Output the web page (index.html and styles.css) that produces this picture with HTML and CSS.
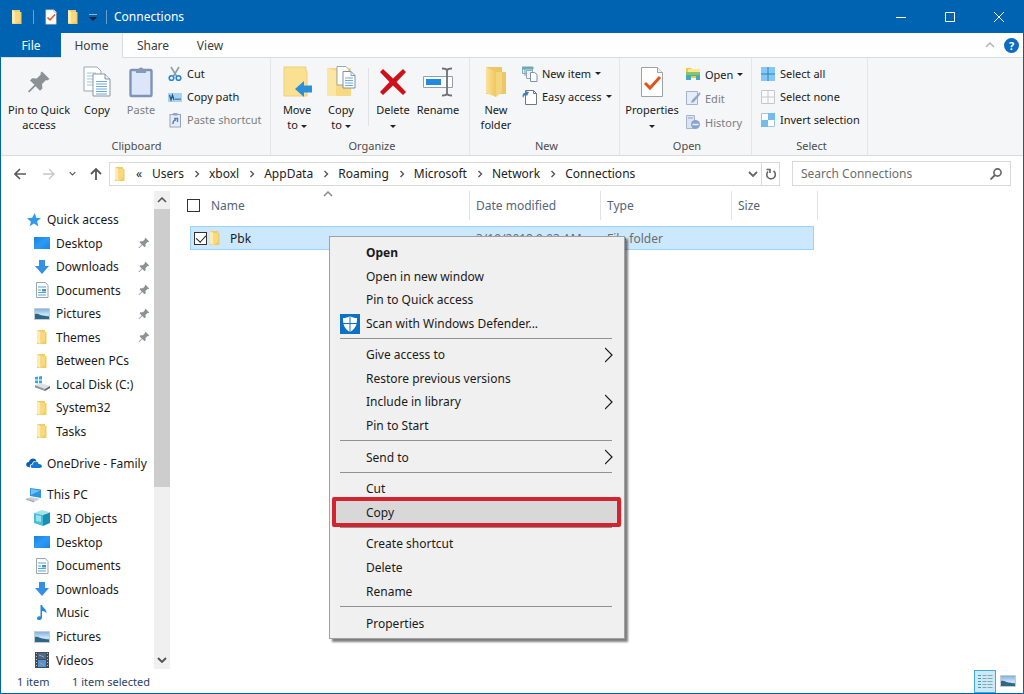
FILE: index.html
```html
<!DOCTYPE html>
<html lang="en">
<head>
<meta charset="utf-8">
<title>Connections</title>
<link rel="stylesheet" href="styles.css">
</head>
<body>
<svg class="sprite" aria-hidden="true">
  <defs>
    <linearGradient id="g-blue" x1="0" y1="0" x2="1" y2="1"><stop offset="0" stop-color="#1581dd"/><stop offset=".5" stop-color="#2d9bf5"/><stop offset="1" stop-color="#1787e6"/></linearGradient>
    <linearGradient id="g-folder" x1="0" x2="1"><stop offset="0" stop-color="#fbe39a"/><stop offset="1" stop-color="#f0c85c"/></linearGradient>
    <linearGradient id="g-sky" x1="0" y1="0" x2="0" y2="1"><stop offset="0" stop-color="#78aee0"/><stop offset=".6" stop-color="#d5e8f7"/><stop offset="1" stop-color="#26566f"/></linearGradient>
    <symbol id="folder" viewBox="0 0 16 16"><path d="M3 1h8v2h1.500v12H3z" fill="#f1cb67"/><path d="M3 1l3.500 2v12L3 13.500z" fill="#fdecae"/><path d="M6.500 3H11v9l-4.500 3z" fill="#f8d980"/></symbol>
    <symbol id="folder-big" viewBox="0 0 32 32"><path d="M6 1h16v5h4v22H6z" fill="#edc765"/><path d="M6 1l10 5v25L6 27z" fill="url(#g-folder)"/><path d="M16 6h6v20l-6 5z" fill="#f5d57c"/></symbol>
    <symbol id="pin" viewBox="0 0 16 16"><path d="M10 1l5 5-1.500 1-.8-.3-2.700 2.700.3 3-1.600 1.400-3-3L1.500 15l-.8-.8L5 9.900 2 7l1.400-1.500 3.100.2L9.200 3 9 2z" fill="#8c9196"/></symbol>
    <symbol id="copy" viewBox="0 0 32 32"><path d="M3 1h13l4 4v20H3z" fill="#fff" stroke="#9aa7b3"/><path d="M6 7h9M6 10h10M6 13h7M6 16h7M6 19h7" stroke="#9cc3e6"/><path d="M12 8h12l5 5v17H12z" fill="#fff" stroke="#8795a3"/><path d="M24 8v5h5" fill="#e6edf4" stroke="#8795a3"/><path d="M15 15.500h11M15 18h11M15 20.500h11M15 23h11M15 25.500h11M15 28h11" stroke="#6fa8da"/></symbol>
    <symbol id="paste" viewBox="0 0 32 32"><rect x="5.500" y="4" width="21" height="26" rx="1" fill="#dbe7f8" stroke="#7f93b8" stroke-width="2.400"/><path d="M11 7V4h2.500a2.500 2.500 0 0 1 5 0H21v3z" fill="#8998b4"/></symbol>
    <symbol id="cut" viewBox="0 0 16 16"><path d="M4 1l5.500 9M12 1L6.500 10" stroke="#8d9eaa" stroke-width="1.600" fill="none"/><circle cx="4.500" cy="12" r="2.300" fill="none" stroke="#2788cf" stroke-width="1.600"/><circle cx="11.500" cy="12" r="2.300" fill="none" stroke="#2788cf" stroke-width="1.600"/></symbol>
    <symbol id="path" viewBox="0 0 16 16"><path d="M1 4h14v9H1z" fill="#a7d3f2"/><path d="M2.500 6l1.500 5 1.500-5 1.500 5M9 9.500v1.500M11 9.500v1.500M13 9.500v1.500" stroke="#27577f" stroke-width="1.200" fill="none"/></symbol>
    <symbol id="shortcut" viewBox="0 0 16 16"><rect x="3" y="2.500" width="10.500" height="12.500" fill="#e4ecf8" stroke="#94a4c3"/><path d="M6 1h4.500v2.500H6z" fill="#94a4c3"/><path d="M6 12c0-3 1-4 3-4M7 6.500h3.500V10" fill="none" stroke="#617fae" stroke-width="1.500"/></symbol>
    <symbol id="move-to" viewBox="0 0 32 32"><path d="M3 1h22v4h1v25H3z" fill="#fbe091" stroke="#efcf78"/><path d="M14 23l9-8v4.500h8v7h-8V31z" fill="#2b90dc"/></symbol>
    <symbol id="copy-to" viewBox="0 0 32 32"><path d="M2 2h24v28H2z" fill="#f8d981"/><path d="M2 2l9 3v25H2z" fill="#fce6a3"/><path d="M12 .5h9l3 3V19H12z" fill="#fff" stroke="#98a5b2"/><path d="M18 5.500h8l4 4V22H18z" fill="#fff" stroke="#8090a2"/><path d="M26 5.500v4h4M20 12h8M20 14.500h8M20 17h8M20 19.500h8" fill="none" stroke="#6fa8da"/></symbol>
    <symbol id="delete" viewBox="0 0 32 32"><path d="M6 3l10 9.500L26 3l3 3-9.500 10L29 26l-3 3-10-9.500L6 29l-3-3 9.500-10L3 6z" fill="#cf1019"/></symbol>
    <symbol id="rename" viewBox="0 0 32 32"><path d="M1.500 10.500h29v11h-29z" fill="#fff" stroke="#8fa0b0"/><path d="M4 13h15v6H4z" fill="#1f8ae0"/><path d="M20 2.500c3 0 4.500 0 5 2 .5-2 2-2 5-2M25 4v25M20 29.500c3 0 4.500 0 5-2 .5 2 2 2 5 2" fill="none" stroke="#6a7278" stroke-width="1.800"/></symbol>
    <symbol id="new-item" viewBox="0 0 16 16"><path d="M.5 1.500h10v6H.5z" fill="#dceef3" stroke="#80aeb8"/><path d="M0 1h11v2H0zM3 3v7" fill="#6daab4" stroke="#6daab4"/><path d="M4.500 4.500h6v8h-6z" fill="#edf3f9" stroke="#94a6b8"/><path d="M8.500 6.500h4l2.500 2v7H8.500z" fill="#fff" stroke="#7c91a8"/></symbol>
    <symbol id="easy" viewBox="0 0 16 16"><path d="M3.500 1.500h8l3 3v11h-11z" fill="#fff" stroke="#70777e"/><path d="M11.500 1.500v3h3" fill="none" stroke="#70777e"/><path d="M1 9c-1-3 0-5 2-5V2l4 1-2 4-1-1C2 6 2 7 1 9z" fill="#3f83ad"/></symbol>
    <symbol id="check-doc" viewBox="0 0 32 32"><path d="M5.500 1.500h16l5 5v24h-21z" fill="#fff" stroke="#9aa3ab"/><path d="M21.500 1.500v5h5" fill="#edf0f3" stroke="#9aa3ab"/><path d="M9 17l5 5 10-11" fill="none" stroke="#e0541c" stroke-width="3"/></symbol>
    <symbol id="open" viewBox="0 0 16 16"><path d="M1 2h5l1 1h7v9H1z" fill="#f3c849"/><path d="M3 3h12v3H3z" fill="#fde68c"/><path d="M1 6h14v8h-4v-4H6v4H1z" fill="#49a8bc"/><path d="M1 6h14v3H1z" fill="#83c766"/></symbol>
    <symbol id="edit" viewBox="0 0 16 16"><path d="M1.500 1.500h11v13h-11z" fill="#e6edf7" stroke="#a3b2ca"/><path d="M15 2l-8 8-1 3 3-1 6.500-8z" fill="#8fa8cd"/></symbol>
    <symbol id="history" viewBox="0 0 16 16"><path d="M1.500 1.500h8v13h-8z" fill="#dbe4f4" stroke="#a6b4cf"/><path d="M3 4h5" stroke="#91a5c8"/><circle cx="10.500" cy="10.500" r="4.500" fill="#89a3cf"/><path d="M7.500 10.500h6" stroke="#e8effa" stroke-width="1.500"/></symbol>
    <symbol id="sel-all" viewBox="0 0 16 16"><path d="M1 1h14v14H1z" fill="#86c8f5"/><path d="M8 1v14M1 8h14" stroke="#2d84c5"/></symbol>
    <symbol id="sel-none" viewBox="0 0 16 16"><path d="M1.500 1.500h13v13h-13zM8 1.500v13M1.500 8h13" fill="#fafafa" stroke="#c4c8cc"/></symbol>
    <symbol id="sel-inv" viewBox="0 0 16 16"><path d="M1.500 1.500h13v13h-13z" fill="#fff" stroke="#9bc8e8"/><path d="M8 1h7v7H8zM1 8h7v7H1z" fill="#74baee"/></symbol>
    <symbol id="star" viewBox="0 0 16 16"><path d="M9 0l1.500 5.500L16 6l-4.500 3.500L13 15.500l-5-3.500-5 3 1.500-5L0 6l5.800-.5z" fill="#2f9ae8"/></symbol>
    <symbol id="desktop" viewBox="0 0 16 16"><path d="M0 2h16v12H0z" fill="url(#g-blue)"/></symbol>
    <symbol id="download" viewBox="0 0 16 16"><path d="M5 1h6v6h4l-7 8-7-8h4z" fill="#3490e3"/></symbol>
    <symbol id="document" viewBox="0 0 16 16"><path d="M2.500.5h9l2.500 3v12H2.500z" fill="#fff" stroke="#9aa5ae"/><path d="M4 5h8M4 8h3M4 10.500h8M4 13h8" stroke="#57a3d2"/><path d="M8 7h4v2.500H8z" fill="#4395c8"/></symbol>
    <symbol id="picture" viewBox="0 0 16 16"><path d="M.5 2.500h15v11H.5z" fill="url(#g-sky)" stroke="#c2ccd5"/><path d="M1 8c3-1 5 2 14 2.500V13H1z" fill="#2d6784"/></symbol>
    <symbol id="disk" viewBox="0 0 16 16"><path d="M1 1l3-.5v3H1zM5 .4L8 0v3.500H5zM1 4.500h3v3L1 7zM5 4.500h3V8l-3-.4z" fill="#28aede"/><path d="M1 9l6-2 9 3-5 3z" fill="#dfe2e4"/><path d="M1 9l10 4v2L1 11.500z" fill="#92989c"/><path d="M11 13l5-3v2l-5 3z" fill="#5d6367"/></symbol>
    <symbol id="cloud" viewBox="0 0 16 16"><path d="M1 11.500C-1 9 1 6.500 3 7c.5-4 6-5 7.500-1C7 5.500 6 8 6 9c-2 .3-2.500 2-2 3.500z" fill="#0a5fb4"/><path d="M6 13c-2-1-1.500-3.500.8-3.500C7 6 12 5.500 12.500 9c4-.5 4.500 4 1.500 4z" fill="#1679d0"/></symbol>
    <symbol id="pc" viewBox="0 0 16 16"><path d="M4 1l11 1.500V11L4 9z" fill="#2d95df"/><path d="M5 2l9 1.500L5 8z" fill="#73bff0"/><path d="M0 11.500l5-1.500 9 2-6 3z" fill="#cbd1d6"/><path d="M0 11.500L8 14v1.500L0 12.500z" fill="#9da5ac"/></symbol>
    <symbol id="cube" viewBox="0 0 16 16"><path d="M0 3l8-3 8 2.500L9 5z" fill="#a4e4ee"/><path d="M0 3l9 2v11l-9-3z" fill="#48bdd6"/><path d="M9 5l7-2.500V13l-7 3z" fill="#1a8fb6"/><path d="M2 5l5 1v6l-5-1z" fill="#9be2ed"/></symbol>
    <symbol id="music" viewBox="0 0 16 16"><path d="M6.500 0H8c.5 3 5 4 4.500 8.500C12 7 10 6 8 6v6.500c0 3-5 3.500-5 1 0-2 2-2.500 3.500-2z" fill="#2389df"/></symbol>
    <symbol id="video" viewBox="0 0 16 16"><path d="M1 0h14v16H1z" fill="#444b54"/><path d="M4 1h8v6H4z" fill="#46678f"/><path d="M4 8h8v7H4z" fill="#4f93d8"/><path d="M5 3l5 2M6 11l4 2" stroke="#c69a57"/><path d="M2.500 1v14M13.500 1v14" stroke="#b8bec5" stroke-dasharray="1 2"/></symbol>
    <symbol id="shield" viewBox="0 0 20 20"><path d="M0 0h20v20H0z" fill="#0c70c6"/><path d="M10 2c2 1.500 4.500 2 7 2 0 7-1.500 11-7 14C4.500 15 3 11 3 4c2.500 0 5-.5 7-2z" fill="#fff"/><path d="M10 2v16M3 9.500h14" stroke="#0c70c6"/></symbol>
    <symbol id="details" viewBox="0 0 16 16"><path d="M1 2.500h3M1 5.500h3M1 8.500h3M1 11.500h3M1 14.500h3" stroke="#4c93bb"/><path d="M5.500 2.500h4M10.500 2.500h5M5.500 5.500h4M10.500 5.500h5M5.500 8.500h4M10.500 8.500h5M5.500 11.500h4M10.500 11.500h5M5.500 14.500h4M10.500 14.500h5" stroke="#8aa4b0"/></symbol>
    <symbol id="chev-right" viewBox="0 0 8 16"><path d="M0 1l7 7-7 7" fill="none" stroke="currentColor" stroke-width="1.200"/></symbol>
    <symbol id="crumb-sep" viewBox="0 0 6 8"><path d="M1.500 1l3 3-3 3" fill="none" stroke="currentColor" stroke-width="1.400"/></symbol>
    <symbol id="chev-up" viewBox="0 0 10 6"><path d="M1 5l4-4 4 4" fill="none" stroke="currentColor" stroke-width="1.500"/></symbol>
    <symbol id="chev-down" viewBox="0 0 10 6"><path d="M1 1l4 4 4-4" fill="none" stroke="currentColor" stroke-width="1.800"/></symbol>
    <symbol id="arrow-left" viewBox="0 0 12 12"><path d="M12 6H1M6 1L1 6l5 5" fill="none" stroke="currentColor" stroke-width="1.600"/></symbol>
    <symbol id="arrow-right" viewBox="0 0 12 12"><path d="M0 6h11M6 1l5 5-5 5" fill="none" stroke="currentColor" stroke-width="1.300"/></symbol>
    <symbol id="arrow-up" viewBox="0 0 12 12"><path d="M6 12V1M1 6l5-5 5 5" fill="none" stroke="currentColor" stroke-width="1.800"/></symbol>
  </defs>
</svg>

<div class="window">
  <header class="titlebar">
    <svg class="i16"><use href="#folder"/></svg>
    <span class="bar"></span>
    <button class="quick" aria-label="Properties"><svg class="i16"><use href="#check-doc"/></svg></button>
    <button class="quick" aria-label="New folder"><svg class="i16"><use href="#folder"/></svg></button>
    <button class="quick customize" aria-label="Customize Quick Access Toolbar"><svg class="i-customize" viewBox="0 0 8 8"><path d="M0 1.500h8" stroke="#8bb7dd"/><path d="M0 4h8L4 8z" fill="#06213b"/></svg></button>
    <span class="bar"></span>
    <h1 class="title">Connections</h1>
    <div class="controls">
      <button class="control" aria-label="Minimize"><svg class="i-control" viewBox="0 0 10 10"><path d="M0 5.500h10" stroke="#fff"/></svg></button>
      <button class="control" aria-label="Maximize"><svg class="i-control" viewBox="0 0 10 10"><path d="M.5.5h9v9h-9z" fill="none" stroke="#fff"/></svg></button>
      <button class="control" aria-label="Close"><svg class="i-control" viewBox="0 0 10 10"><path d="M0 0l10 10M10 0L0 10" stroke="#fff"/></svg></button>
    </div>
  </header>

  <nav class="tabs" aria-label="Ribbon tabs">
    <button class="tab tab-file">File</button>
    <button class="tab tab-active">Home</button>
    <button class="tab">Share</button>
    <button class="tab tab-last">View</button>
    <div class="tab-tools">
      <button class="plain collapse" aria-label="Minimize the Ribbon"><svg class="i-chev"><use href="#chev-up"/></svg></button>
      <button class="help" aria-label="Help">?</button>
    </div>
  </nav>

  <section class="ribbon" aria-label="Home">
    <div class="group group-clipboard">
      <div class="tools">
        <button class="big big-wide"><svg class="i32 i-pin"><use href="#pin"/></svg><span>Pin to Quick<br>access</span></button>
        <button class="big big-narrow"><svg class="i32"><use href="#copy"/></svg><span>Copy</span></button>
        <button class="big big-narrow" disabled><svg class="i32"><use href="#paste"/></svg><span>Paste</span></button>
        <div class="stack">
          <button class="small"><svg class="i16"><use href="#cut"/></svg>Cut</button>
          <button class="small"><svg class="i16"><use href="#path"/></svg>Copy path</button>
          <button class="small" disabled><svg class="i16"><use href="#shortcut"/></svg>Paste shortcut</button>
        </div>
      </div>
      <h2 class="caption">Clipboard</h2>
    </div>
    <div class="group group-organize">
      <div class="tools">
        <button class="big big-narrow"><svg class="i32"><use href="#move-to"/></svg><span>Move<br>to <i class="caret"></i></span></button>
        <button class="big big-narrow"><svg class="i32"><use href="#copy-to"/></svg><span>Copy<br>to <i class="caret"></i></span></button>
        <span class="divider"></span>
        <button class="big big-narrow"><svg class="i32"><use href="#delete"/></svg><span>Delete<br><i class="caret"></i></span></button>
        <button class="big big-mid"><svg class="i32"><use href="#rename"/></svg><span>Rename</span></button>
      </div>
      <h2 class="caption">Organize</h2>
    </div>
    <div class="group group-new">
      <div class="tools">
        <button class="big big-narrow"><svg class="i32"><use href="#folder-big"/></svg><span>New<br>folder</span></button>
        <div class="stack">
          <button class="small"><svg class="i16"><use href="#new-item"/></svg>New item<i class="caret"></i></button>
          <button class="small"><svg class="i16"><use href="#easy"/></svg>Easy access<i class="caret"></i></button>
        </div>
      </div>
      <h2 class="caption">New</h2>
    </div>
    <div class="group group-open">
      <div class="tools">
        <button class="big big-prop"><svg class="i32"><use href="#check-doc"/></svg><span>Properties<br><i class="caret"></i></span></button>
        <div class="stack">
          <button class="small"><svg class="i16"><use href="#open"/></svg>Open<i class="caret"></i></button>
          <button class="small" disabled><svg class="i16"><use href="#edit"/></svg>Edit</button>
          <button class="small" disabled><svg class="i16"><use href="#history"/></svg>History</button>
        </div>
      </div>
      <h2 class="caption">Open</h2>
    </div>
    <div class="group group-select">
      <div class="tools">
        <div class="stack">
          <button class="small"><svg class="i16"><use href="#sel-all"/></svg>Select all</button>
          <button class="small"><svg class="i16"><use href="#sel-none"/></svg>Select none</button>
          <button class="small"><svg class="i16"><use href="#sel-inv"/></svg>Invert selection</button>
        </div>
      </div>
      <h2 class="caption">Select</h2>
    </div>
  </section>

  <div class="navbar">
    <div class="history">
      <button class="plain" aria-label="Back"><svg class="i12"><use href="#arrow-left"/></svg></button>
      <button class="plain faint" aria-label="Forward"><svg class="i12"><use href="#arrow-right"/></svg></button>
      <button class="plain" aria-label="Recent locations"><svg class="i-tiny"><use href="#chev-down"/></svg></button>
      <button class="plain" aria-label="Up"><svg class="i12"><use href="#arrow-up"/></svg></button>
    </div>
    <div class="address">
      <svg class="i16"><use href="#folder"/></svg>
      <nav class="crumbs" aria-label="Address">
        <span class="more">«</span>
        <a href="#">Users</a><svg class="i-sep"><use href="#crumb-sep"/></svg>
        <a href="#">xboxl</a><svg class="i-sep"><use href="#crumb-sep"/></svg>
        <a href="#">AppData</a><svg class="i-sep"><use href="#crumb-sep"/></svg>
        <a href="#">Roaming</a><svg class="i-sep"><use href="#crumb-sep"/></svg>
        <a href="#">Microsoft</a><svg class="i-sep"><use href="#crumb-sep"/></svg>
        <a href="#">Network</a><svg class="i-sep"><use href="#crumb-sep"/></svg>
        <a href="#">Connections</a>
      </nav>
      <button class="plain previous" aria-label="Previous locations"><svg class="i-chev"><use href="#chev-down"/></svg></button>
      <button class="plain refresh" aria-label="Refresh"><svg class="i12" viewBox="0 0 12 12"><path d="M8.500 3A4.300 4.300 0 1 1 3 3.500M1.500 1.500h3.500v3.500" fill="none" stroke="currentColor" stroke-width="1.600"/></svg></button>
    </div>
    <div class="search">
      <input class="search-box" type="search" placeholder="Search Connections" aria-label="Search Connections">
      <svg class="i12" viewBox="0 0 12 12"><circle cx="7.500" cy="4.500" r="3.600" fill="none" stroke="#666" stroke-width="1.600"/><path d="M5 7L.5 11.500" stroke="#666" stroke-width="1.800"/></svg>
    </div>
  </div>

  <main class="body">
    <aside class="sidebar">
      <div class="tree">
        <ul class="branch rows-10">
          <li class="node root"><svg class="i-root"><use href="#star"/></svg>Quick access</li>
          <li class="node"><svg class="i16"><use href="#desktop"/></svg>Desktop<svg class="pinned"><use href="#pin"/></svg></li>
          <li class="node"><svg class="i16"><use href="#download"/></svg>Downloads<svg class="pinned"><use href="#pin"/></svg></li>
          <li class="node"><svg class="i16"><use href="#document"/></svg>Documents<svg class="pinned"><use href="#pin"/></svg></li>
          <li class="node"><svg class="i16"><use href="#picture"/></svg>Pictures<svg class="pinned"><use href="#pin"/></svg></li>
          <li class="node"><svg class="i16"><use href="#folder"/></svg>Themes<svg class="pinned"><use href="#pin"/></svg></li>
          <li class="node"><svg class="i16"><use href="#folder"/></svg>Between PCs</li>
          <li class="node"><svg class="i16"><use href="#disk"/></svg>Local Disk (C:)</li>
          <li class="node"><svg class="i16"><use href="#folder"/></svg>System32</li>
          <li class="node"><svg class="i16"><use href="#folder"/></svg>Tasks</li>
        </ul>
        <ul class="branch rows-1">
          <li class="node root"><svg class="i16"><use href="#cloud"/></svg>OneDrive - Family</li>
        </ul>
        <ul class="branch rows-8">
          <li class="node root"><svg class="i16"><use href="#pc"/></svg>This PC</li>
          <li class="node"><svg class="i16"><use href="#cube"/></svg>3D Objects</li>
          <li class="node"><svg class="i16"><use href="#desktop"/></svg>Desktop</li>
          <li class="node"><svg class="i16"><use href="#document"/></svg>Documents</li>
          <li class="node"><svg class="i16"><use href="#download"/></svg>Downloads</li>
          <li class="node"><svg class="i16"><use href="#music"/></svg>Music</li>
          <li class="node"><svg class="i16"><use href="#picture"/></svg>Pictures</li>
          <li class="node"><svg class="i16"><use href="#video"/></svg>Videos</li>
        </ul>
      </div>
      <div class="scrollbar">
        <button class="plain scroll-button" aria-label="Scroll up"><svg class="i-scroll"><use href="#chev-up"/></svg></button>
        <div class="track"><div class="thumb"></div></div>
        <button class="plain scroll-button" aria-label="Scroll down"><svg class="i-scroll"><use href="#chev-down"/></svg></button>
      </div>
    </aside>
    <section class="files">
      <table class="list">
        <thead>
          <tr>
            <th class="col-name"><div class="head"><input class="check" type="checkbox" aria-label="Select all items">Name<svg class="sort"><use href="#chev-up"/></svg></div></th>
            <th class="col-date"><div class="head">Date modified</div></th>
            <th class="col-type"><div class="head">Type</div></th>
            <th class="col-size"><div class="head head-last">Size</div></th>
          </tr>
        </thead>
        <tbody>
          <tr class="selected">
            <td><label class="file"><input class="check" type="checkbox" checked><svg class="i16"><use href="#folder"/></svg>Pbk</label></td>
            <td>3/19/2018 9:03 AM</td>
            <td>File folder</td>
            <td></td>
          </tr>
        </tbody>
      </table>
    </section>
  </main>

  <footer class="status">
    <span class="count">1 item</span>
    <span>1 item selected</span>
    <div class="views">
      <button class="view view-active" aria-label="Details"><svg class="i16"><use href="#details"/></svg></button>
      <button class="view" aria-label="Large icons"><svg class="i16"><use href="#picture"/></svg></button>
    </div>
  </footer>

  <div class="menu" role="menu">
    <div class="section rows-4">
      <button class="item item-default" role="menuitem">Open</button>
      <button class="item" role="menuitem">Open in new window</button>
      <button class="item" role="menuitem">Pin to Quick access</button>
      <button class="item" role="menuitem"><svg class="item-icon"><use href="#shield"/></svg>Scan with Windows Defender...</button>
    </div>
    <div class="section rows-4">
      <button class="item" role="menuitem">Give access to<svg class="submenu"><use href="#chev-right"/></svg></button>
      <button class="item" role="menuitem">Restore previous versions</button>
      <button class="item" role="menuitem">Include in library<svg class="submenu"><use href="#chev-right"/></svg></button>
      <button class="item" role="menuitem">Pin to Start</button>
    </div>
    <div class="section rows-1">
      <button class="item" role="menuitem">Send to<svg class="submenu"><use href="#chev-right"/></svg></button>
    </div>
    <div class="section rows-2">
      <button class="item" role="menuitem">Cut</button>
      <button class="item item-marked" role="menuitem">Copy</button>
    </div>
    <div class="section rows-3">
      <button class="item" role="menuitem">Create shortcut</button>
      <button class="item" role="menuitem">Delete</button>
      <button class="item" role="menuitem">Rename</button>
    </div>
    <div class="section rows-1">
      <button class="item" role="menuitem">Properties</button>
    </div>
  </div>
</div>
</body>
</html>
```

FILE: styles.css
```css
* { box-sizing: border-box; }
body { margin: 0; font-family: "Noto Sans", "Open Sans", sans-serif; font-size: 12px; line-height: 15px; color: #1a1a1a; }
button { font: inherit; color: inherit; background: none; border: 0; padding: 0; margin: 0; }
a { color: inherit; text-decoration: none; }
h1, h2 { margin: 0; font: inherit; }
ul { margin: 0; padding: 0; list-style: none; }
svg { display: block; flex: none; }
.sprite { position: absolute; width: 0; height: 0; }

.i12 { width: 12px; height: 12px; }
.i16 { width: 16px; height: 16px; }
.i32 { width: 32px; height: 32px; }
.i-pin { padding: 4px; }
.i-root { width: 14px; height: 14px; margin: 0 1px; }
.i-control { width: 10px; height: 10px; }
.i-customize { width: 8px; height: 8px; }
.i-chev { width: 10px; height: 6px; }
.i-tiny { width: 7px; height: 5px; }
.i-sep { width: 6px; height: 8px; margin: 0 9px 0 10px; color: #555; }
.i-scroll { width: 10px; height: 6px; }

.window { position: relative; display: flex; flex-direction: column; height: 100vh; min-width: 900px; background: #fff; border: 1px solid #0063b1; border-top: 0; overflow: hidden; }
.plain { display: flex; align-items: center; justify-content: center; }

.titlebar { display: flex; align-items: center; height: 33px; padding-left: 8px; background: #0063b1; color: #fff; flex: none; }
.bar { width: 1px; height: 14px; background: #6c9fcd; margin: 0 9px 0 8px; }
.quick { margin-right: 6px; }
.customize { padding: 0 4px; margin: 0 0 0 -2px; }
.customize + .bar { margin: 0 7px 0 5px; }
.controls { display: flex; margin-left: auto; }
.control { display: flex; align-items: center; justify-content: center; width: 49px; height: 32px; }

.tabs { display: flex; height: 25px; flex: none; border-bottom: 1px solid #dcddde; }
.tab { width: 60px; height: 24px; color: #3c3c3c; }
.tab-file { background: #0063b1; color: #fff; }
.tab-active { width: 62px; height: 25px; background: #f5f6f7; border-right: 1px solid #dcddde; }
.tab-last { width: 54px; }
.tab-tools { display: flex; align-items: center; gap: 9px; margin-left: auto; padding-right: 4px; }
.collapse { color: #b0b4b8; }
.help { width: 15px; height: 15px; border-radius: 50%; background: #0c6cc0; color: #fff; font-weight: 700; font-size: 11px; line-height: 15px; }

.ribbon { display: flex; height: 98px; flex: none; background: #f5f6f7; border-bottom: 1px solid #dadbdc; font-size: 11px; }
.group { display: flex; flex-direction: column; border-right: 1px solid #e4e5e6; padding: 4px 0 1px; }
.tools { display: flex; flex: 1; }
.caption { text-align: center; line-height: 17px; color: #4c4c4c; }
.group-clipboard { width: 270px; padding-left: 2px; }
.group-organize { width: 199px; padding-left: 4px; }
.group-new { width: 150px; padding-left: 4px; }
.group-open { width: 132px; padding-left: 3px; }
.group-select { width: 116px; padding-left: 4px; }
.big { display: flex; flex-direction: column; align-items: center; padding-top: 4px; gap: 4px; white-space: nowrap; }
.big-wide { width: 72px; }
.big-mid { width: 46px; }
.big-narrow { width: 44px; }
.big-prop { width: 58px; }
.stack { display: flex; flex-direction: column; padding-left: 4px; }
.small { display: flex; align-items: center; gap: 4px; height: 23px; white-space: nowrap; }
.group-open .small { height: 24px; }
.ribbon button:disabled { color: #7b7e82; }
.caret { display: inline-block; border: 3px solid transparent; border-top-color: #222; border-bottom-width: 0; vertical-align: middle; }
.divider { width: 1px; height: 58px; margin: 6px 2px 0 5px; background: #e0e1e2; }

.navbar { display: flex; align-items: center; height: 35px; padding: 0 12px 0 0; flex: none; }
.history { display: flex; align-items: center; gap: 17px; width: 108px; padding-left: 13px; color: #5a5a5a; }
.history .plain:nth-child(3) { margin: 0 -3px; }
.faint { color: #c6c6c6; }
.address { display: flex; align-items: center; flex: 1; height: 24px; border: 1px solid #d9d9d9; padding-left: 2px; }
.crumbs { display: flex; align-items: center; color: #222; padding-left: 8px; flex: 1; }
.more { width: 16px; }
.previous { width: 16px; color: #666; }
.refresh { width: 18px; height: 22px; border-left: 1px solid #d9d9d9; color: #666; }
.search { display: flex; align-items: center; width: 219px; height: 25px; margin-left: 12px; padding: 0 8px; border: 1px solid #d9d9d9; }
.search-box { flex: 1; min-width: 0; border: 0; outline: 0; padding: 0; background: none; font: inherit; }
.search-box::placeholder { color: #6d6d6d; }

.body { display: flex; flex: 1; min-height: 0; }
.sidebar { display: flex; width: 169px; flex: none; }
.tree { flex: 1; display: flex; flex-direction: column; gap: 8px; padding: 17px 0 0 25px; overflow: hidden; }
.branch, .section { display: grid; grid-auto-rows: 1fr; flex: none; }
.rows-10 { min-height: 235px; }
.rows-8 { min-height: 189px; }
.rows-4 { min-height: 94px; }
.rows-3 { min-height: 71px; }
.rows-2 { min-height: 47px; }
.rows-1 { min-height: 24px; }
.node { display: flex; align-items: center; gap: 6px; padding: 0 4px 0 8px; white-space: nowrap; }
.node.root { gap: 5px; padding: 0; }
.pinned { width: 12px; height: 12px; margin-left: auto; }
.scrollbar { display: flex; flex-direction: column; width: 16px; background: #f0f0f0; }
.scroll-button { height: 18px; color: #505050; }
.track { flex: 1; }
.thumb { height: 63%; background: #cdcdcd; }

.files { flex: 1; padding-left: 20px; }
.list { width: 624px; table-layout: fixed; border-collapse: separate; border-spacing: 0; }
.list th { padding: 0 0 6px; font-weight: 400; text-align: left; color: #54647a; }
.col-name { width: 280px; }
.col-date, .col-type { width: 131px; }
.head { position: relative; display: flex; align-items: center; height: 29px; padding-left: 6px; border-right: 1px solid #e2e2e2; }
.col-name .head { padding-left: 0; gap: 11px; margin-left: -3px; }
.head-last { margin-right: -4px; }
.sort { position: absolute; left: 136px; top: 0; width: 10px; height: 6px; color: #8a8a8a; }
.check { appearance: none; position: relative; width: 13px; height: 13px; margin: 0; border: 1px solid #333; background: #fff; flex: none; }
.check:checked::after { content: ""; position: absolute; left: 3px; top: 0; width: 5px; height: 8px; border: solid #222; border-width: 0 1px 1px 0; transform: rotate(42deg); }
.selected td { height: 24px; padding: 0 0 0 6px; background: #cce8ff; border: solid #99d1ff; border-width: 1px 0; color: #6d6d6d; }
.selected td:first-child { padding-left: 3px; border-left-width: 1px; color: #1a1a1a; }
.selected td:last-child { border-right-width: 1px; }
.file { display: flex; align-items: center; }
.file .i16 { margin: 0 7px 0 0; }

.status { display: flex; align-items: center; height: 24px; padding-left: 16px; flex: none; color: #2c3e63; font-size: 11px; }
.count { width: 55px; }
.views { display: flex; align-items: center; gap: 2px; margin-left: auto; padding-right: 5px; }
.view { display: flex; align-items: center; justify-content: center; width: 20px; height: 23px; }
.view-active { width: 22px; background: #cbeaf8; border: 1px solid #45a9d5; }

.menu { position: absolute; left: 328px; top: 236px; width: 296px; padding: 4px 2px 3px; background: #f0f0f0; border: 1px solid #a0a0a0; box-shadow: 3px 3px 2px rgba(0, 0, 0, .5); }
.section + .section { position: relative; margin-top: 8px; }
.section + .section::before { content: ""; position: absolute; left: 8px; right: 10px; top: -5px; height: 1px; background: #919191; }
.item { position: relative; display: flex; align-items: center; justify-content: space-between; padding: 0 9px 0 34px; text-align: left; }
.item-default { font-weight: 700; }
.item-icon { position: absolute; left: 8px; top: 2px; width: 20px; height: 20px; }
.submenu { width: 8px; height: 16px; }
.item-marked { z-index: 1; background: #d8d8d8; }
.item-marked::after { content: ""; position: absolute; inset: -4px 1px -3px 0; border: 4px solid #d2232e; border-radius: 2px; }
```
